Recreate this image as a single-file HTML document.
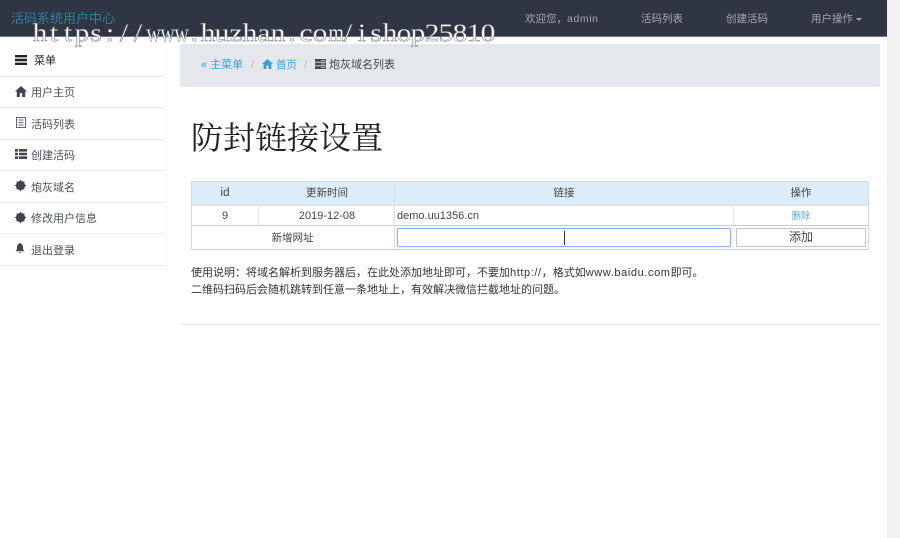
<!DOCTYPE html>
<html><head><meta charset="utf-8"><title>防封链接设置</title>
<style>
*{box-sizing:border-box}
html,body{margin:0;padding:0;width:900px;height:538px;overflow:hidden;background:#fff}
body{font-family:"Liberation Sans","Noto Sans CJK SC",sans-serif;font-size:11px;color:#333;position:relative}
.a{position:absolute;white-space:nowrap}
#sb{left:887px;top:0;width:13px;height:538px;background:#f0f0f0}
#nav{left:0;top:0;width:887px;height:37px;background:#2f3542;border-bottom:1px solid #6e7480}
.nl{color:#a3a7af;font-size:10.5px;line-height:14px;top:12px}
#wm{left:33px;top:19px;font:25px/30px "Liberation Serif",serif;color:#fff;-webkit-text-stroke:.55px #808080;z-index:5;display:flex}
#wm i{display:block;width:14px;font-style:normal;text-align:center;flex:none;transform:scaleX(1.18)}
#wm b{display:block;width:14px;font-weight:400;text-align:center;flex:none;transform:scaleX(.8)}
#side{left:0;top:44px;width:165px;height:222px;box-shadow:1px 0 1px rgba(0,0,0,.02)}
.it{position:absolute;left:0;width:165px;border-bottom:1px solid #ececec;color:#4a4f58;font-size:11px;line-height:14px}
.it span{position:absolute;left:31px;top:9px}
.it svg{position:absolute;left:15px;top:9px}
#bc{left:180px;top:44px;width:700px;height:43px;background:#e4e7ec;border-radius:2px}
#bc .a{top:14px;line-height:14px;font-size:11px}
h1{position:absolute;left:191px;top:119px;margin:0;font:400 32px/38px "Liberation Serif","Noto Serif CJK SC",serif;color:#222;white-space:nowrap}
.c{position:absolute;text-align:center;line-height:14px;font-size:10.5px;color:#444}
.ln{position:absolute;background:#d8d8d8}
.p{left:191px;font-size:11px;line-height:14px;color:#333}
.l{letter-spacing:.6px}
</style></head><body>
<div class="a" id="sb"></div>
<div class="a" id="nav"></div>
<div class="a" style="left:11px;top:10px;color:#2f7f9f;font-size:13px;line-height:17px;z-index:2">活码系统用户中心</div>
<div class="a nl" style="left:525px">欢迎您，<span class="l">admin</span></div>
<div class="a nl" style="left:641px">活码列表</div>
<div class="a nl" style="left:726px">创建活码</div>
<div class="a nl" style="left:811px">用户操作</div>
<div class="a" style="left:856px;top:18px;width:0;height:0;border-left:3px solid transparent;border-right:3px solid transparent;border-top:3px solid #a3a7af"></div>
<div class="a" id="wm"><i>h</i><i>t</i><i>t</i><i>p</i><i>s</i><i>:</i><i>/</i><i>/</i><b>w</b><b>w</b><b>w</b><i>.</i><i>h</i><i>u</i><i>z</i><i>h</i><i>a</i><i>n</i><i>.</i><i>c</i><i>o</i><b>m</b><i>/</i><i>i</i><i>s</i><i>h</i><i>o</i><i>p</i><i>2</i><i>5</i><i>8</i><i>1</i><i>0</i></div>

<div class="a" id="side">
<div class="it" style="top:0;height:33px;color:#222"><svg width="12" height="10" viewBox="0 0 12 10" style="top:11px"><path d="M0 0h12v2.400H0zM0 3.800h12v2.400H0zM0 7.600h12V10H0z" fill="#222"/></svg><span style="left:34px;top:10px">菜单</span></div>
<div class="it" style="top:33px;height:31px"><svg width="12" height="11" viewBox="0 0 11 10" style="left:15px"><path d="M5.500 0L0 5h1.600v5h2.800V6.500h2.200V10h2.800V5H11z" fill="#3f4652"/></svg><span>用户主页</span></div>
<div class="it" style="top:64px;height:32px"><svg width="10" height="11" viewBox="0 0 10 11" style="left:16px"><path d="M.5.500h9v10h-9z" fill="none" stroke="#5b6675"/><path d="M2.500 3h5M2.500 5.500h5M2.500 8h5" stroke="#5b6675"/></svg><span style="top:10px">活码列表</span></div>
<div class="it" style="top:96px;height:31px"><svg width="12" height="10" viewBox="0 0 12 10"><path d="M0 0h3v2.600H0zM4 0h8v2.600H4zM0 3.700h3v2.600H0zM4 3.700h8v2.600H4zM0 7.400h3V10H0zM4 7.400h8V10H4z" fill="#3f4652"/></svg><span>创建活码</span></div>
<div class="it" style="top:127px;height:32px"><svg width="11" height="11" viewBox="0 0 10 10"><circle cx="5" cy="5" r="4.200" fill="#3f4652"/><path d="M5 0v10M0 5h10M1.500 1.500l7 7M8.500 1.500l-7 7" stroke="#3f4652"/></svg><span style="top:10px">炮灰域名</span></div>
<div class="it" style="top:159px;height:31px"><svg width="11" height="11" viewBox="0 0 10 10"><circle cx="5" cy="5" r="4.200" fill="#3f4652"/><path d="M5 0v10M0 5h10M1.500 1.500l7 7M8.500 1.500l-7 7" stroke="#3f4652"/></svg><span>修改用户信息</span></div>
<div class="it" style="top:190px;height:32px"><svg width="10" height="11" viewBox="0 0 10 11"><path d="M5 0c.6 0 1 .4 1 .9C7.500 1.400 8 3 8 4.500c0 2 .7 3 1.500 3.800H.5C1.300 7.500 2 6.500 2 4.500 2 3 2.500 1.400 4 .9 4 .4 4.400 0 5 0zM4 9.300h2c0 .6-.4 1-1 1s-1-.4-1-1z" fill="#3f4652"/></svg><span style="top:10px">退出登录</span></div>
</div>

<div class="a" id="bc">
<div class="a" style="left:21px;color:#3a9fd0">« 主菜单</div>
<div class="a" style="left:71px;color:#bbb">/</div>
<svg class="a" style="left:82px;top:15px" width="11" height="10" viewBox="0 0 11 10"><path d="M5.500 0L0 5h1.600v5h2.800V6.500h2.200V10h2.800V5H11z" fill="#3a9fd0"/></svg>
<div class="a" style="left:96px;color:#3a9fd0;font-size:10.500px">首页</div>
<div class="a" style="left:124px;color:#bbb">/</div>
<svg class="a" style="left:135px;top:15px" width="11" height="10" viewBox="0 0 11 10"><path d="M0 0h11v2.800H0zM0 3.600h11v2.800H0zM0 7.200h11V10H0z" fill="#444b55"/><path d="M6 1.400h4M6 5h4M6 8.600h4" stroke="#ccc" stroke-width=".8"/></svg>
<div class="a" style="left:149px;color:#444">炮灰域名列表</div>
</div>

<h1>防封链接设置</h1>

<div class="a" style="left:191px;top:181px;width:678px;height:24px;background:#dbecfb"></div>
<div class="ln" style="left:191px;top:181px;width:678px;height:1px"></div>
<div class="ln" style="left:191px;top:204px;width:678px;height:2px;background:#e2e6ea"></div>
<div class="ln" style="left:191px;top:225px;width:678px;height:1px;background:#ccc"></div>
<div class="ln" style="left:191px;top:249px;width:678px;height:1px;background:#ccc"></div>
<div class="ln" style="left:191px;top:181px;width:1px;height:69px"></div>
<div class="ln" style="left:868px;top:181px;width:1px;height:69px"></div>
<div class="ln" style="left:258px;top:182px;width:1px;height:43px;background:#e2e6ea"></div>
<div class="ln" style="left:394px;top:182px;width:1px;height:67px;background:#ddd"></div>
<div class="ln" style="left:733px;top:182px;width:1px;height:43px;background:#e2e6ea"></div>

<div class="c" style="left:191px;width:68px;top:186px;font-size:11.500px">id</div>
<div class="c" style="left:259px;width:136px;top:186px">更新时间</div>
<div class="c" style="left:395px;width:338px;top:186px">链接</div>
<div class="c" style="left:733px;width:136px;top:186px">操作</div>
<div class="c" style="left:191px;width:68px;top:209px;font-size:11px">9</div>
<div class="c" style="left:259px;width:136px;top:209px;font-size:11px">2019-12-08</div>
<div class="a" style="left:397px;top:209px;line-height:14px;font-size:11px;color:#444">demo.uu1356.cn</div>
<div class="c" style="left:733px;width:136px;top:210px;color:#5aa9d6;font-size:9.500px">删除</div>
<div class="c" style="left:191px;width:203px;top:231px">新增网址</div>
<div class="a" style="left:397px;top:228px;width:334px;height:19px;border:1px solid #8fb2ec;border-radius:2px;box-shadow:0 0 1px #8fb2ec"></div>
<div class="a" style="left:564px;top:231px;width:1px;height:14px;background:#333"></div>
<div class="a" style="left:736px;top:228px;width:130px;height:19px;border:1px solid #c4c4c4;text-align:center;font-size:12px;line-height:17px;color:#444">添加</div>

<div class="a p" style="top:266px">使用说明：将域名解析到服务器后，在此处添加地址即可，不要加<span class="l">http://</span>，格式如<span class="l">www.baidu.com</span>即可。</div>
<div class="a p" style="top:283px">二维码扫码后会随机跳转到任意一条地址上，有效解决微信拦截地址的问题。</div>
<div class="a" style="left:180px;top:324px;width:700px;height:1px;background:#eee"></div>
</body></html>
